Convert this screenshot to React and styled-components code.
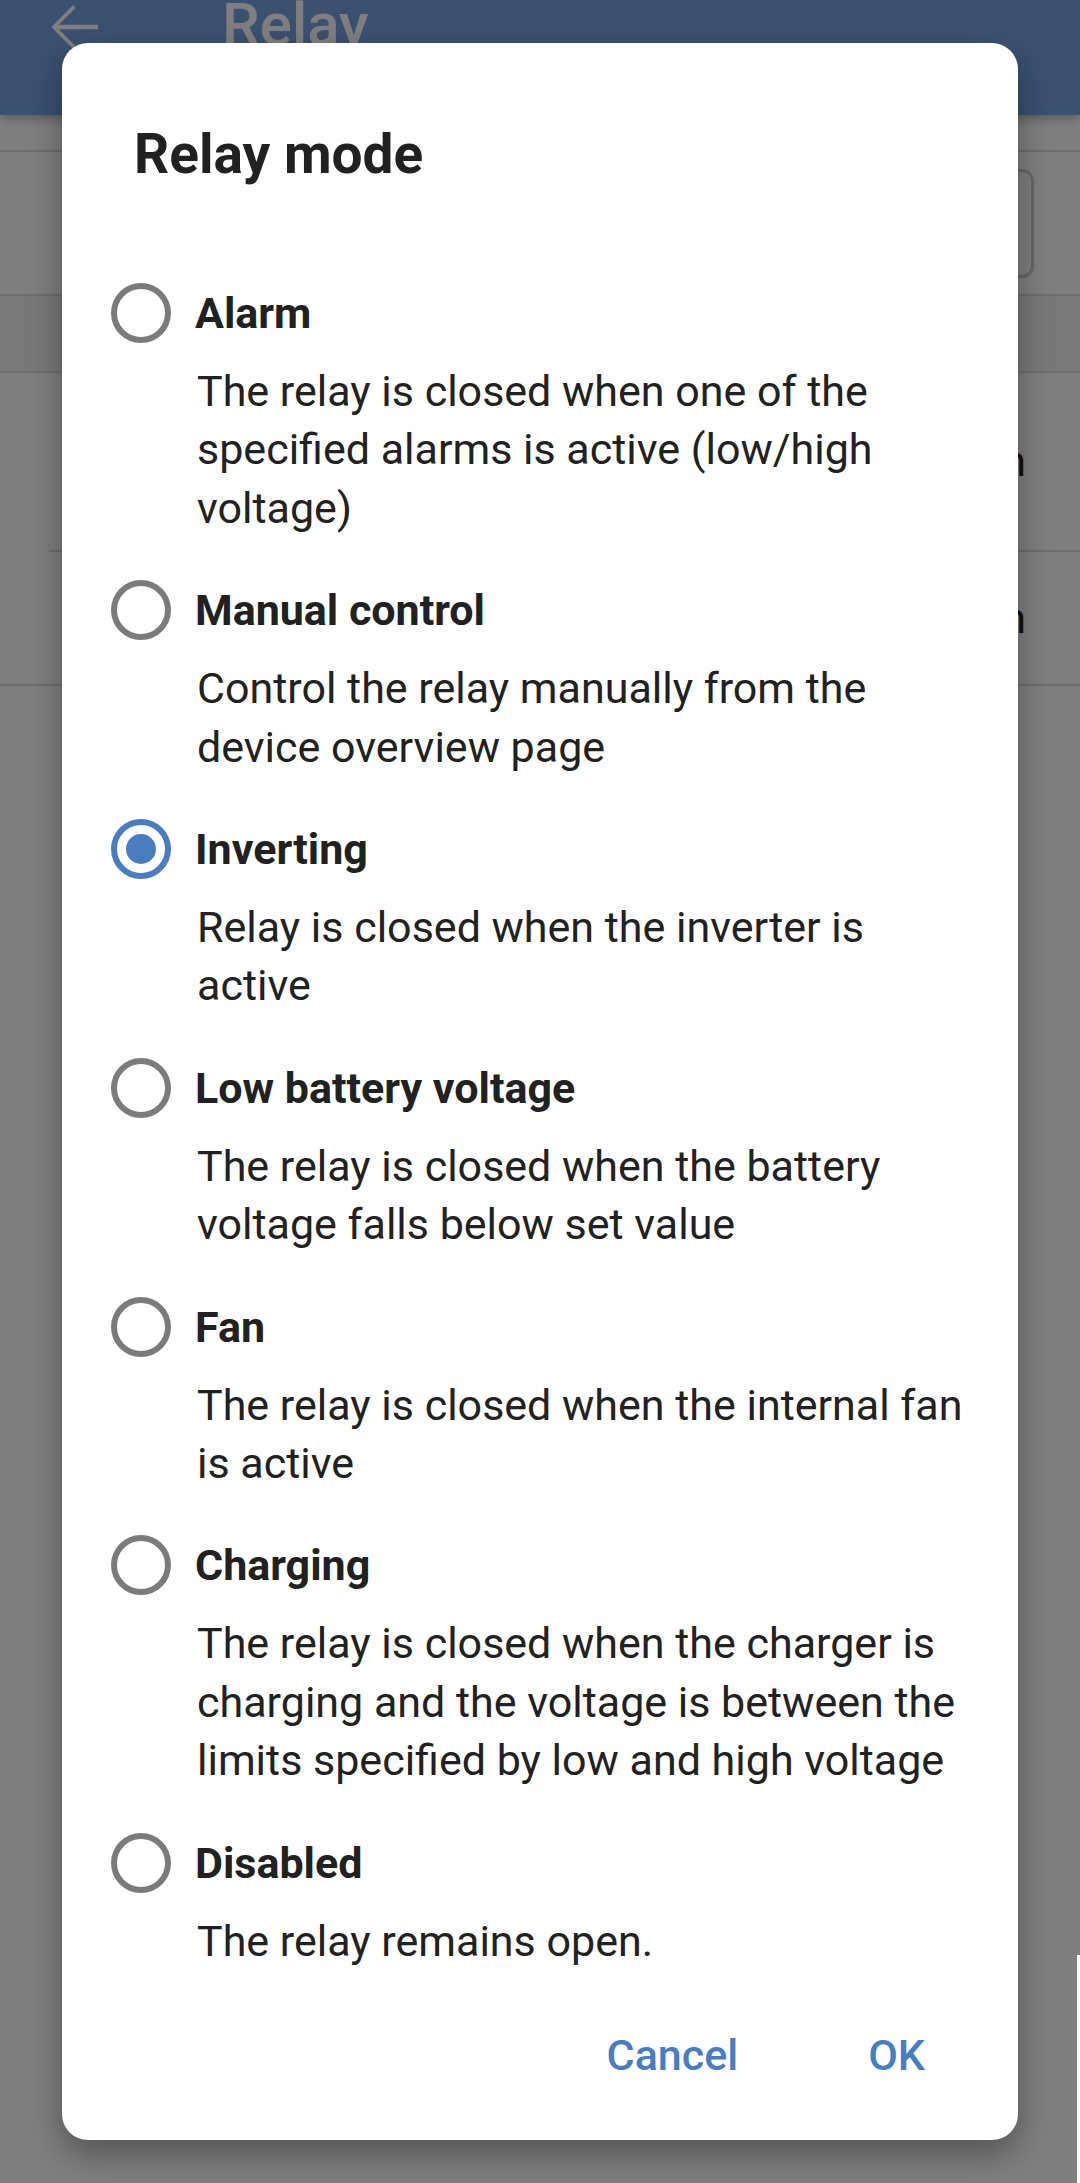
import styled, { createGlobalStyle } from "styled-components"

const GlobalStyle = createGlobalStyle`
  html, body {
    margin: 0;
    padding: 0;
    background: #ffffff;
    font-family: Roboto, "Noto Sans", "Liberation Sans", sans-serif;
  }
  #root {
    height: 2183px;
  }
`

const Page = styled.div`
  position: relative;
  width: 1080px;
  height: 2183px;
  overflow: hidden;
  background: #ffffff;
`

const AppBar = styled.header`
  height: 115px;
  background: #76a2e0;
  display: flex;
  align-items: flex-start;
  gap: 112px;
  padding: 0 0 0 38px;
  box-sizing: border-box;
  box-shadow: 0 4px 10px rgba(0, 0, 0, 0.28);
  position: relative;
  z-index: 1;
`

const BackIcon = styled.svg`
  width: 72px;
  height: 72px;
  margin-top: -9px;
  flex-shrink: 0;
`

const AppTitle = styled.h1`
  margin: -10px 0 0;
  font-size: 60px;
  font-weight: 500;
  line-height: 70px;
  color: #ffffff;
`

const Row = styled.div`
  height: ${(p) => p.$h}px;
  display: flex;
  align-items: center;
  justify-content: flex-end;
  padding: 0 54px 0 48px;
  box-sizing: border-box;
  background: ${(p) => (p.$band ? "#f2f2f2" : "#ffffff")};
  border-bottom: ${(p) => (p.$noLine ? "none" : "2px solid #dcdcdc")};
  font-size: 42px;
  color: #212121;
`

const InsetLine = styled.div`
  height: 2px;
  margin-left: 49px;
  background: #dcdcdc;
`

const OutlineBox = styled.div`
  width: 300px;
  height: 103px;
  border: 3px solid #cfcfcf;
  border-radius: 12px;
  margin-right: -8px;
`

const Scrim = styled.div`
  position: absolute;
  inset: 0;
  z-index: 5;
  background: rgba(0, 0, 0, 0.5);
  display: flex;
  align-items: center;
  justify-content: center;
`

const EdgeMark = styled.div`
  position: absolute;
  right: 0;
  top: 1955px;
  bottom: 0;
  width: 3px;
  background: #ffffff;
  z-index: 6;
`

const Dialog = styled.div`
  width: 956px;
  background: #ffffff;
  border-radius: 26px;
  box-shadow: 0 14px 34px rgba(0, 0, 0, 0.35);
  padding: 78px 52px 43px 49px;
  box-sizing: border-box;
  color: #212121;
`

const DialogTitle = styled.h2`
  margin: 0 0 96px 23px;
  font-size: 55px;
  line-height: 66px;
  font-weight: 700;
`

const OptionList = styled.div`
  display: flex;
  flex-direction: column;
  gap: 43px;
`

const Option = styled.div`
  display: flex;
  flex-direction: column;
  gap: 19px;
`

const OptionHead = styled.div`
  height: 60px;
  display: flex;
  align-items: center;
  gap: 24px;
`

const Radio = styled.span`
  width: 60px;
  height: 60px;
  box-sizing: border-box;
  border-radius: 50%;
  border: 6.5px solid ${(p) => (p.$checked ? "#4a7cc0" : "#7b7b7b")};
  display: flex;
  align-items: center;
  justify-content: center;
  flex-shrink: 0;

  &::after {
    content: "";
    width: 30px;
    height: 30px;
    border-radius: 50%;
    background: #4a7cc0;
    display: ${(p) => (p.$checked ? "block" : "none")};
  }
`

const OptionLabel = styled.span`
  font-size: 43px;
  font-weight: 700;
  line-height: 60px;
`

const OptionDesc = styled.p`
  margin: 0 0 0 86px;
  font-size: 43px;
  line-height: 58.4px;
  font-weight: 400;
`

const Actions = styled.div`
  margin-top: 43px;
  height: 84px;
  display: flex;
  justify-content: flex-end;
  align-items: center;
  gap: 90px;
  padding-right: 21px;
`

const TextButton = styled.button`
  border: none;
  background: none;
  padding: 0 20px;
  height: 84px;
  font-family: inherit;
  font-size: 43px;
  font-weight: 500;
  color: #4a7cc0;
`

const options = [
  {
    label: "Alarm",
    desc: "The relay is closed when one of the specified alarms is active (low/high voltage)",
  },
  {
    label: "Manual control",
    desc: "Control the relay manually from the device overview page",
  },
  {
    label: "Inverting",
    desc: "Relay is closed when the inverter is active",
    checked: true,
  },
  {
    label: "Low battery voltage",
    desc: "The relay is closed when the battery voltage falls below set value",
  },
  {
    label: "Fan",
    desc: "The relay is closed when the internal fan is active",
  },
  {
    label: "Charging",
    desc: "The relay is closed when the charger is charging and the voltage is between the limits specified by low and high voltage",
  },
  {
    label: "Disabled",
    desc: "The relay remains open.",
  },
]

const App = () => {
  return (
    <Page>
      <GlobalStyle />
      <AppBar>
        <BackIcon viewBox="0 0 24 24">
          <path
            d="M20 11.25H6.9l5.6-5.6-.9-.9L4.45 12l7.15 7.25.9-.9-5.6-5.6H20z"
            fill="#ffffff"
          />
        </BackIcon>
        <AppTitle>Relay</AppTitle>
      </AppBar>
      <Row $h={37} />
      <Row $h={144}>
        <OutlineBox />
      </Row>
      <Row $h={77} $band />
      <Row $h={177} $noLine>
        <span>On</span>
      </Row>
      <InsetLine />
      <Row $h={134}>
        <span>Open</span>
      </Row>

      <Scrim>
        <Dialog>
          <DialogTitle>Relay mode</DialogTitle>
          <OptionList>
            {options.map((o) => (
              <Option key={o.label}>
                <OptionHead>
                  <Radio $checked={o.checked} />
                  <OptionLabel>{o.label}</OptionLabel>
                </OptionHead>
                <OptionDesc>{o.desc}</OptionDesc>
              </Option>
            ))}
          </OptionList>
          <Actions>
            <TextButton>Cancel</TextButton>
            <TextButton>OK</TextButton>
          </Actions>
        </Dialog>
      </Scrim>
      <EdgeMark />
    </Page>
  )
}

export default App
